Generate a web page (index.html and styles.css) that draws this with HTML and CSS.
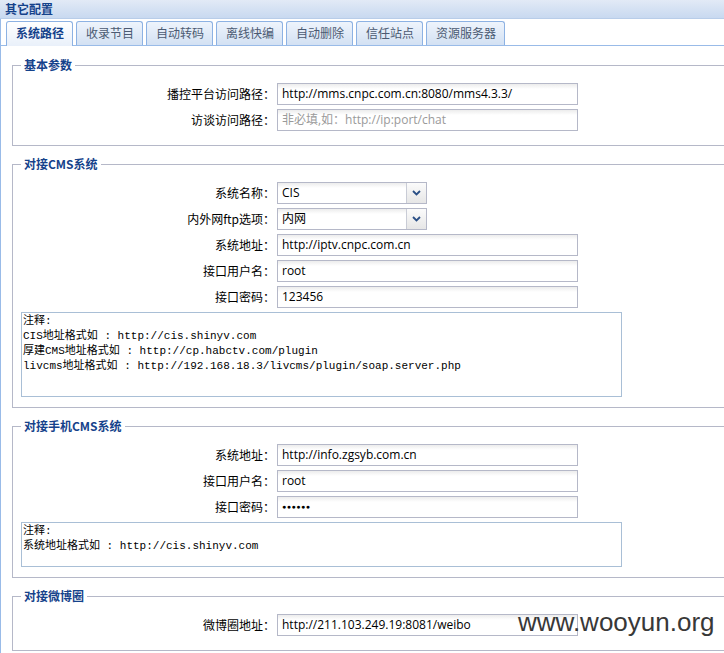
FILE: index.html
```html
<!DOCTYPE html>
<html lang="zh">
<head>
<meta charset="utf-8">
<title>其它配置</title>
<link rel="stylesheet" href="styles.css">
</head>
<body>
<div class="panel">
  <div class="header">其它配置</div>
  <div class="tabbar">
    <div class="tab active">系统路径</div>
    <div class="tab">收录节目</div>
    <div class="tab">自动转码</div>
    <div class="tab">离线快编</div>
    <div class="tab">自动删除</div>
    <div class="tab">信任站点</div>
    <div class="tab">资源服务器</div>
  </div>
  <div class="body">
    <fieldset class="group">
      <legend>基本参数</legend>
      <div class="row"><label>播控平台访问路径：</label><div class="input">http://mms.cnpc.com.cn:8080/mms4.3.3/</div></div>
      <div class="row"><label>访谈访问路径：</label><div class="input placeholder">非必填,如：http://ip:port/chat</div></div>
    </fieldset>

    <fieldset class="group">
      <legend>对接CMS系统</legend>
      <div class="row"><label>系统名称：</label><div class="select"><span class="val">CIS</span><span class="trigger"><svg width="9" height="6" viewBox="0 0 9 6"><path d="M1 1 L4.5 4.5 L8 1" fill="none" stroke="#2a4f86" stroke-width="1.8"/></svg></span></div></div>
      <div class="row"><label>内外网ftp选项：</label><div class="select"><span class="val">内网</span><span class="trigger"><svg width="9" height="6" viewBox="0 0 9 6"><path d="M1 1 L4.5 4.5 L8 1" fill="none" stroke="#2a4f86" stroke-width="1.8"/></svg></span></div></div>
      <div class="row"><label>系统地址：</label><div class="input">http://iptv.cnpc.com.cn</div></div>
      <div class="row"><label>接口用户名：</label><div class="input">root</div></div>
      <div class="row"><label>接口密码：</label><div class="input">123456</div></div>
      <div class="note tall">注释:
CIS地址格式如 : http://cis.shinyv.com
厚建CMS地址格式如 : http://cp.habctv.com/plugin
livcms地址格式如 : http://192.168.18.3/livcms/plugin/soap.server.php</div>
    </fieldset>

    <fieldset class="group">
      <legend>对接手机CMS系统</legend>
      <div class="row"><label>系统地址：</label><div class="input">http://info.zgsyb.com.cn</div></div>
      <div class="row"><label>接口用户名：</label><div class="input">root</div></div>
      <div class="row"><label>接口密码：</label><div class="input pwd">●●●●●●</div></div>
      <div class="note short">注释:
系统地址格式如 : http://cis.shinyv.com</div>
    </fieldset>

    <fieldset class="group">
      <legend>对接微博圈</legend>
      <div class="row"><label>微博圈地址：</label><div class="input">http://211.103.249.19:8081/weibo</div></div>
    </fieldset>
  </div>
  <div class="watermark">www.wooyun.org</div>
</div>
</body>
</html>
```
FILE: styles.css
```css
html, body {
  margin: 0;
  padding: 0;
  background: #fff;
}
body {
  font-family: "Noto Sans CJK SC", "Liberation Sans", sans-serif;
  font-size: 12px;
  color: #000;
  overflow: hidden;
}
.panel {
  position: relative;
  width: 724px;
  height: 653px;
  overflow: hidden;
}
.header {
  height: 18px;
  line-height: 17px;
  padding-left: 5px;
  font-weight: bold;
  color: #15428b;
  background: linear-gradient(#e2eaf6, #c8d9f0);
  border-bottom: 1px solid #b8cde9;
}
.tabbar {
  display: flex;
  gap: 3px;
  height: 25px;
  padding: 1px 0 0 5px;
  background: #fff;
  border-left: 1px solid #99bbe8;
  border-bottom: 1px solid #99bbe8;
  align-items: flex-end;
}
.tab {
  box-sizing: border-box;
  height: 24px;
  line-height: 22px;
  padding: 0 8px 0 9px;
  border: 1px solid #8db2e3;
  border-bottom: none;
  border-radius: 3px 3px 0 0;
  background: linear-gradient(#eef4fc, #d3e1f3);
  color: #4b5a72;
  font-size: 12px;
}
.tab.active {
  background: linear-gradient(#ffffff, #e9f0fa);
  color: #15428b;
  font-weight: bold;
  height: 25px;
  margin-bottom: -1px;
}
.body {
  border-left: 1px solid #99bbe8;
  padding: 11px 0 0 11px;
  height: 620px;
}
.group {
  margin: 0 -30px 10px 0;
  padding: 10px 8px 10px 8px;
  border: 1px solid #b5b8c8;
  border-right: none;
}
.group legend {
  padding: 0 3px;
  line-height: 16px;
  font-weight: bold;
  color: #15428b;
  font-size: 12px;
}
.row {
  display: flex;
  align-items: center;
  margin-bottom: 4px;
}
.row label {
  width: 254px;
  text-align: right;
  padding-right: 2px;
  line-height: 22px;
  color: #000;
}
.input {
  box-sizing: border-box;
  width: 301px;
  height: 22px;
  line-height: 20px;
  padding: 0 4px;
  border: 1px solid #b5b8c8;
  background: linear-gradient(#ececec, #fff 5px);
  font-family: "Open Sans", "Liberation Sans", sans-serif;
  font-size: 12px;
  color: #000;
  white-space: nowrap;
  overflow: hidden;
}
.input.placeholder {
  color: #9a9a9a;
  font-family: "Open Sans", "Noto Sans CJK SC", sans-serif;
}
.input.pwd {
  font-size: 7px;
  letter-spacing: 0.5px;
}
.select {
  box-sizing: border-box;
  display: flex;
  width: 150px;
  height: 22px;
  border: 1px solid #b5b8c8;
  background: linear-gradient(#ececec, #fff 5px);
}
.select .val {
  flex: 1;
  line-height: 20px;
  padding: 0 4px;
  font-family: "Open Sans", "Noto Sans CJK SC", sans-serif;
}
.select .trigger {
  width: 19px;
  border-left: 1px solid #c9ccd6;
  background: linear-gradient(#fbfbfb, #e6e6e6);
  display: flex;
  align-items: center;
  justify-content: center;
}
.note {
  box-sizing: border-box;
  width: 601px;
  border: 1px solid #a9bfd6;
  padding: 1px 1px;
  font-family: "Liberation Mono", "Noto Sans CJK SC", monospace;
  font-size: 11px;
  line-height: 15px;
  white-space: pre;
  color: #000;
}
.note.tall {
  height: 85px;
}
.note.short {
  height: 45px;
}
.watermark {
  position: absolute;
  left: 518px;
  top: 607px;
  font-family: "Liberation Sans", sans-serif;
  font-size: 26px;
  color: #383838;
  white-space: nowrap;
}
```
